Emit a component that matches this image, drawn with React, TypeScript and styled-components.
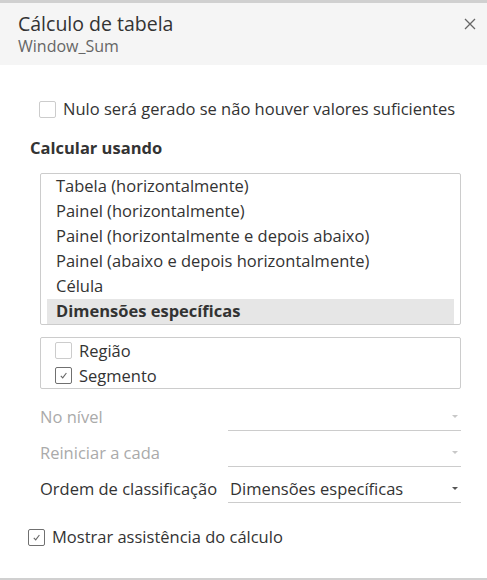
import styled, { createGlobalStyle } from "styled-components";

const GlobalStyle = createGlobalStyle`
	html, body {
		margin: 0;
		padding: 0;
		background: #ffffff;
	}
	body {
		font-family: "Open Sans", Roboto, "Liberation Sans", sans-serif;
		color: #333333;
	}
`;

const partitions = [
	"Tabela (horizontalmente)",
	"Painel (horizontalmente)",
	"Painel (horizontalmente e depois abaixo)",
	"Painel (abaixo e depois horizontalmente)",
	"Célula",
	"Dimensões específicas",
];

const dimensions = [
	{ name: "Região", checked: false },
	{ name: "Segmento", checked: true },
];

const options = [
	{ label: "No nível", value: "", disabled: true },
	{ label: "Reiniciar a cada", value: "", disabled: true },
	{ label: "Ordem de classificação", value: "Dimensões específicas", disabled: false },
];

function CheckBox(props: { checked?: boolean }) {
	return (
		<Box $checked={props.checked}>
			{props.checked ? (
				<svg width="11" height="11" viewBox="0 0 11 11">
					<path d="M2.8 5.8 L4.7 7.8 L8.4 3" fill="none" stroke="#666" strokeWidth="1.1" />
				</svg>
			) : null}
		</Box>
	);
}

// Table calculation dialog
export default function App() {
	const selected = partitions.length - 1;

	return (
		<>
			<GlobalStyle />
			<Dialog>
				<Header>
					<Titles>
						<Title>Cálculo de tabela</Title>
						<Subtitle>Window_Sum</Subtitle>
					</Titles>
					<Close title="Fechar">
						<svg width="12" height="12" viewBox="0 0 12 12">
							<path d="M1 1 L11 11 M11 1 L1 11" stroke="#666" strokeWidth="1.3" />
						</svg>
					</Close>
				</Header>

				<Body>
					<NullRow>
						<CheckBox />
						<span>Nulo será gerado se não houver valores suficientes</span>
					</NullRow>

					<Heading>Calcular usando</Heading>

					<ListBox>
						{partitions.map((p, i) => (
							<ListItem key={p} $selected={i === selected}>
								{p}
							</ListItem>
						))}
					</ListBox>

					<DimBox>
						{dimensions.map((d) => (
							<DimItem key={d.name}>
								<CheckBox checked={d.checked} />
								<span>{d.name}</span>
							</DimItem>
						))}
					</DimBox>

					<Options>
						{options.map((o) => (
							<OptionRow key={o.label} $disabled={o.disabled}>
								<OptionLabel>{o.label}</OptionLabel>
								<Select>
									<span>{o.value}</span>
									<Arrow $disabled={o.disabled} />
								</Select>
							</OptionRow>
						))}
					</Options>

					<AssistRow>
						<CheckBox checked />
						<span>Mostrar assistência do cálculo</span>
					</AssistRow>
				</Body>
			</Dialog>
		</>
	);
}

// Styled Components
const Dialog = styled.div`
	width: 487px;
	height: 580px;
	box-sizing: border-box;
	border-top: 3px solid #d0d0d0;
	border-bottom: 2px solid #d0d0d0;
	display: flex;
	flex-direction: column;
	overflow: hidden;
`;

const Header = styled.header`
	background: #f5f5f5;
	height: 62px;
	box-sizing: border-box;
	padding: 8px 9px 0 18px;
	display: flex;
	justify-content: space-between;
	align-items: flex-start;
`;

const Titles = styled.div`
	display: flex;
	flex-direction: column;
`;

const Title = styled.h1`
	margin: 0;
	font-size: 19.5px;
	font-weight: 400;
	line-height: 25px;
	color: #333;
`;

const Subtitle = styled.div`
	font-size: 16px;
	line-height: 20px;
	color: #666;
`;

const Close = styled.div`
	width: 16px;
	height: 16px;
	margin-top: 5px;
	display: flex;
	align-items: center;
	justify-content: center;
	cursor: pointer;
`;

const Body = styled.div`
	padding: 0 26px 0 28px;
	display: flex;
	flex-direction: column;
	font-size: 16.5px;
`;

const Box = styled.span<{ $checked?: boolean }>`
	width: 17px;
	height: 17px;
	box-sizing: border-box;
	border: 1px solid ${(p) => (p.$checked ? "#707070" : "#cccccc")};
	border-radius: 2px;
	background: #fff;
	display: inline-flex;
	align-items: center;
	justify-content: center;
	flex-shrink: 0;
`;

const CheckRow = styled.label`
	display: flex;
	align-items: center;
	gap: 7px;
	height: 20px;
	line-height: 20px;
`;

const NullRow = styled(CheckRow)`
	margin: 34px 0 0 11px;
`;

const Heading = styled.h2`
	margin: 19px 0 0 2px;
	font-size: 16.5px;
	font-weight: 700;
	line-height: 20px;
	color: #333;
`;

const ListBox = styled.div`
	margin: 15px 0 0 12px;
	border: 1px solid #cccccc;
	border-radius: 2px;
	padding: 0 6px 0 6px;
`;

const ListItem = styled.div<{ $selected?: boolean }>`
	height: 25px;
	line-height: 24px;
	padding-left: 9px;
	font-weight: ${(p) => (p.$selected ? 700 : 400)};
	background: ${(p) => (p.$selected ? "#e6e6e6" : "transparent")};
`;

const DimBox = styled.div`
	margin: 12px 0 0 12px;
	border: 1px solid #cccccc;
	border-radius: 2px;
	padding: 0 14px;
`;

const DimItem = styled(CheckRow)`
	height: 25px;
`;

const Options = styled.div`
	margin: 13px 0 0 12px;
	display: flex;
	flex-direction: column;
	gap: 7px;
`;

const OptionRow = styled.div<{ $disabled?: boolean }>`
	display: grid;
	grid-template-columns: 188px 1fr;
	align-items: center;
	color: ${(p) => (p.$disabled ? "#aaaaaa" : "#333333")};
`;

const OptionLabel = styled.span`
	white-space: nowrap;
`;

const Select = styled.div`
	height: 29px;
	box-sizing: border-box;
	border-bottom: 1px solid #cccccc;
	padding: 0 2px 0 2px;
	display: flex;
	align-items: center;
	justify-content: space-between;
`;

const Arrow = styled.span<{ $disabled?: boolean }>`
	width: 0;
	height: 0;
	margin-right: 1px;
	border-left: 3px solid transparent;
	border-right: 3px solid transparent;
	border-top: 3px solid ${(p) => (p.$disabled ? "#c8c8c8" : "#555555")};
`;

const AssistRow = styled(CheckRow)`
	margin-top: 24px;
`;
